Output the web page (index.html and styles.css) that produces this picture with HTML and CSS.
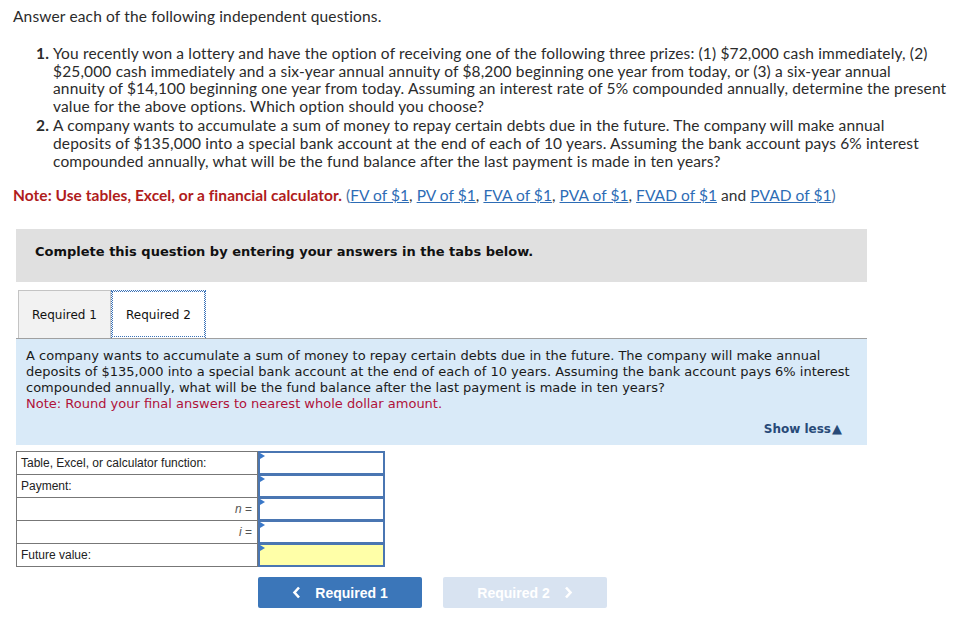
FILE: index.html
```html
<!DOCTYPE html>
<html>
<head>
<meta charset="utf-8">
<link rel="stylesheet" href="styles.css">
</head>
<body>
<div class="page">
  <p class="intro">Answer each of the following independent questions.</p>
  <ol class="qlist">
    <li><span class="num">1.</span><span class="qtext">You recently won a lottery and have the option of receiving one of the following three prizes: (1) $72,000 cash immediately, (2)<br>$25,000 cash immediately and a six-year annual annuity of $8,200 beginning one year from today, or (3) a six-year annual<br>annuity of $14,100 beginning one year from today. Assuming an interest rate of 5% compounded annually, determine the present<br>value for the above options. Which option should you choose?</span></li>
    <li><span class="num">2.</span><span class="qtext">A company wants to accumulate a sum of money to repay certain debts due in the future. The company will make annual<br>deposits of $135,000 into a special bank account at the end of each of 10 years. Assuming the bank account pays 6% interest<br>compounded annually, what will be the fund balance after the last payment is made in ten years?</span></li>
  </ol>
  <p class="note"><span class="note-red">Note: Use tables, Excel, or a financial calculator.</span> <span class="paren">(</span><a class="lnk">FV of $1</a>, <a class="lnk">PV of $1</a>, <a class="lnk">FVA of $1</a>, <a class="lnk">PVA of $1</a>, <a class="lnk">FVAD of $1</a> and <a class="lnk">PVAD of $1</a><span class="paren">)</span></p>

  <div class="instr">Complete this question by entering your answers in the tabs below.</div>

  <div class="tabs">
    <div class="tab tab-off">Required 1</div>
    <div class="tab tab-on">Required 2</div>
  </div>

  <div class="panel">
    <p class="ptext">A company wants to accumulate a sum of money to repay certain debts due in the future. The company will make annual<br>deposits of $135,000 into a special bank account at the end of each of 10 years. Assuming the bank account pays 6% interest<br>compounded annually, what will be the fund balance after the last payment is made in ten years?</p>
    <p class="pnote">Note: Round your final answers to nearest whole dollar amount.</p>
    <div class="showless">Show less<span class="tri">&#9650;</span></div>
  </div>

  <div class="grid">
    <div class="lab">Table, Excel, or calculator function:</div><div class="inp"></div>
    <div class="lab">Payment:</div><div class="inp"></div>
    <div class="lab right"><span><i>n</i>&nbsp;=</span></div><div class="inp"></div>
    <div class="lab right"><span><i>i</i>&nbsp;=</span></div><div class="inp"></div>
    <div class="lab">Future value:</div><div class="inp yellow"></div>
  </div>

  <div class="navs">
    <div class="btn btn-prev"><svg class="chev-l" width="9" height="13" viewBox="0 0 9 13"><polyline points="7,1.5 2.5,6.5 7,11.5" fill="none" stroke="#fff" stroke-width="2.6"/></svg>Required 1</div>
    <div class="btn btn-next">Required 2<svg class="chev-r" width="9" height="13" viewBox="0 0 9 13"><polyline points="2,1.5 6.5,6.5 2,11.5" fill="none" stroke="#fff" stroke-width="2.6"/></svg></div>
  </div>
</div>
</body>
</html>
```

FILE: styles.css
```css
* { box-sizing: border-box; }
body { margin: 0; background: #fff; }
.page { padding: 7px 0 0 0; font-family: Lato, "Open Sans", sans-serif; color: #2b2b2b; }
.intro { margin: 0 0 0 13px; font-size: 15.5px; letter-spacing: 0.15px; line-height: 18px; }
.qlist { list-style: none; margin: 20px 0 0 0; padding: 0; font-size: 15.5px; letter-spacing: 0.15px; line-height: 17.7px; }
.qlist li { display: flex; margin-bottom: 1.3px; white-space: nowrap; }
.num { width: 53px; padding-right: 4px; text-align: right; font-weight: bold; flex: none; }
.note { margin: 16px 0 0 13px; font-size: 15.5px; letter-spacing: 0.05px; line-height: 18px; white-space: nowrap; color: #333; }
.note-red { color: #b01c1c; font-weight: bold; }
.paren { color: #4a6ea0; }
.lnk { color: #2d6cb5; text-decoration: underline; }
.instr { margin: 25px 0 0 16px; width: 851px; height: 53px; background: #e0e0e0; padding: 0 0 8px 19px; display: flex; align-items: center; font-family: Verdana, "DejaVu Sans", sans-serif; font-weight: bold; font-size: 13px; color: #111; }
.tabs { display: flex; margin: 8px 0 0 16px; width: 851px; padding-left: 2px; border-bottom: 1px solid #a0a0a0; }
.tab { height: 48px; display: flex; align-items: center; justify-content: center; font-family: Verdana, "DejaVu Sans", sans-serif; font-size: 12px; color: #111; padding-top: 0; }
.tab-off { width: 93px; background: #f2f2f2; border: 1px solid #c4c4c4; border-bottom: none; }
.tab-on { width: 95px; background: #fff; border: 1px dotted #3a72b8; outline: 1px dotted #3a72b8; outline-offset: -2px; border-bottom: none; }
.panel { margin-left: 16px; width: 851px; height: 106px; background: #d9eaf8; padding: 9px 0 0 10px; font-family: Verdana, "DejaVu Sans", sans-serif; font-size: 13px; line-height: 16px; color: #1a1a1a; display: flex; flex-direction: column; }
.ptext { margin: 0; white-space: nowrap; }
.pnote { margin: 0; color: #b0123a; }
.showless { align-self: flex-end; margin: 9px 25px 0 0; font-weight: bold; font-size: 12px; color: #284a78; }
.tri { font-size: 13px; margin-left: 1px; }
.grid { display: grid; grid-template-columns: 242px 127px; margin: 6px 0 0 16px; width: 369px; font-family: Arial, "Liberation Sans", sans-serif; font-size: 12px; color: #222; }
.lab { height: 23px; border: 1px solid #777; border-top: none; display: flex; align-items: center; padding-left: 4px; }
.grid .lab:first-child { border-top: 1px solid #777; height: 24px; }
.lab.right { justify-content: flex-end; padding-right: 5px; color: #555; }
.inp { height: 23px; border: 2px solid #4a76b2; border-top-width: 1px; background: #fff; position: relative; }
.grid .inp:nth-child(2) { border-top-width: 2px; height: 24px; }
.inp::before { content: ""; position: absolute; left: 0; top: 0; border-left: 5px solid #3a78c8; border-top: 3px solid transparent; border-bottom: 3px solid transparent; }
.inp.yellow { background: #ffffa8; }
.navs { display: flex; gap: 21px; margin: 10px 0 0 258px; }
.btn { width: 164px; height: 31px; border-radius: 2px; display: flex; align-items: center; justify-content: center; font-family: Arial, "Liberation Sans", sans-serif; font-weight: bold; font-size: 14px; color: #fff; }
.btn-prev { background: #3b76b9; }
.btn-next { background: #d8e3f1; }
.chev-l { margin-right: 14px; }
.chev-r { margin-left: 14px; }
```
